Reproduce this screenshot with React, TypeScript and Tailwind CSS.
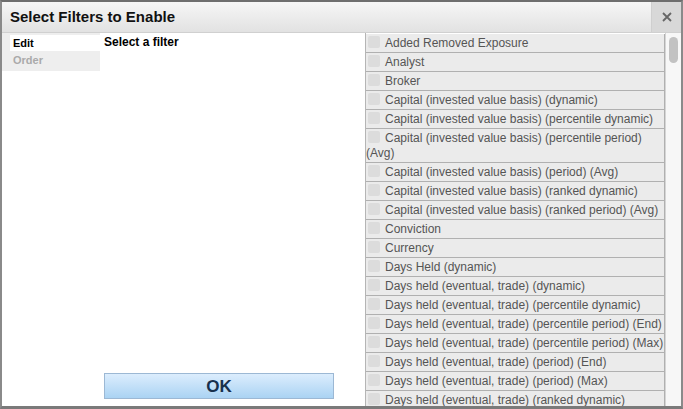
const FILTERS = [
  "Added Removed Exposure",
  "Analyst",
  "Broker",
  "Capital (invested value basis) (dynamic)",
  "Capital (invested value basis) (percentile dynamic)",
  "Capital (invested value basis) (percentile period) (Avg)",
  "Capital (invested value basis) (period) (Avg)",
  "Capital (invested value basis) (ranked dynamic)",
  "Capital (invested value basis) (ranked period) (Avg)",
  "Conviction",
  "Currency",
  "Days Held (dynamic)",
  "Days held (eventual, trade) (dynamic)",
  "Days held (eventual, trade) (percentile dynamic)",
  "Days held (eventual, trade) (percentile period) (End)",
  "Days held (eventual, trade) (percentile period) (Max)",
  "Days held (eventual, trade) (period) (End)",
  "Days held (eventual, trade) (period) (Max)",
  "Days held (eventual, trade) (ranked dynamic)",
  "Days held (eventual, trade) (ranked period) (End)",
];

export default function App() {
  return (
    <div
      className="w-[683px] h-[409px] flex flex-col bg-white border-x-2 border-t-2 border-b-[3px] border-x-[#8a8a8a] border-t-[#6e6e6e] border-b-[#7a7a7a] overflow-hidden"
      style={{ fontFamily: '"Liberation Sans", Arial, sans-serif' }}
    >
      {/* header */}
      <div className="h-[31px] flex shrink-0 bg-gradient-to-b from-[#f6f6f6] to-[#e2e2e2] border-b border-[#d0d0d0]">
        <div className="flex-1 flex items-center pl-[8px] text-[15px] font-bold text-[#111]">
          Select Filters to Enable
        </div>
        <div className="w-[30px] flex items-center justify-center bg-[#d8d8d8] border-l border-[#cfcfcf]">
          <svg width="10" height="10" viewBox="0 0 10 10">
            <path d="M1 1 L9 9 M9 1 L1 9" stroke="#666" strokeWidth="1.8" />
          </svg>
        </div>
      </div>

      {/* body */}
      <div className="flex-1 flex min-h-0">
        <div className="w-[98px] shrink-0 flex flex-col">
          <div className="bg-[#eeeeee] pl-[8px] pt-[2px]">
            <div className="h-[16px] bg-white pl-[3px] text-[11px] font-bold text-black leading-[16px]">Edit</div>
            <div className="h-[20px] pl-[3px] text-[11px] font-bold text-[#aaa] leading-[19px]">Order</div>
          </div>
        </div>

        <div className="w-[265px] shrink-0 flex flex-col pl-[4px] pb-[7px]">
          <div className="pt-[2px] text-[12px] font-bold text-black leading-[15px]">Select a filter</div>
          <div className="flex-1" />
          <button className="w-[230px] h-[26px] border border-[#9cb8d4] bg-gradient-to-b from-[#dcedfd] to-[#aad3f3] text-[17px] font-bold text-[#17304d]">
            OK
          </button>
        </div>

        <div className="flex-1 flex min-w-0 border-l border-[#b5b5b5]">
          <div className="flex-1 overflow-hidden pt-[1px]">
            {FILTERS.map((f) => (
              <div
                key={f}
                className="bg-[#ebebeb] border-b border-[#b0b0b0] border-r border-r-[#b0b0b0] text-[12px] leading-[15px] text-[#555] pt-[2px] pb-[1px]"
              >
                <span className="inline-block align-[-1px] w-[12px] h-[12px] rounded-[2px] bg-[#dcdcdc] ml-[2px] mr-[5px]" />
                {f}
              </div>
            ))}
          </div>
          <div className="w-[16px] shrink-0 bg-[#f7f7f7] border-l border-[#d5d5d5] pt-[4px] flex justify-center">
            <div className="w-[9px] h-[26px] rounded-full bg-[#c2c2c2]" />
          </div>
        </div>
      </div>
    </div>
  );
}
